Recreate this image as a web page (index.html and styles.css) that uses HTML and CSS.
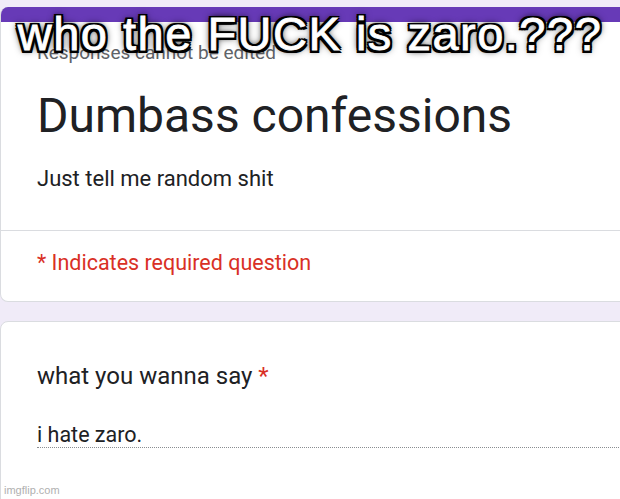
FILE: index.html
```html
<!DOCTYPE html>
<html>
<head>
<meta charset="utf-8">
<link rel="stylesheet" href="styles.css">
</head>
<body>
<div class="page">
  <div class="card card-header">
    <div class="accent"></div>
    <div class="head">
      <div class="responses">Responses cannot be edited</div>
      <div class="title">Dumbass confessions</div>
      <div class="desc">Just tell me random shit</div>
    </div>
    <div class="required">* Indicates required question</div>
  </div>
  <div class="card card-question">
    <div class="question">what you wanna say <span class="star">*</span></div>
    <div class="answer">i hate zaro.</div>
  </div>
</div>
<div class="caption">who the FUCK is zaro.???</div>
<div class="watermark">imgflip.com</div>
</body>
</html>
```
FILE: styles.css
```css
html, body {
  margin: 0;
  padding: 0;
}
body {
  width: 620px;
  height: 499px;
  overflow: hidden;
  background: #f0ebf8;
  font-family: Roboto, "Liberation Sans", Arial, sans-serif;
  color: #202124;
  position: relative;
}
.page {
  padding-top: 7px;
  display: flex;
  flex-direction: column;
  gap: 19px;
}
.card {
  width: 680px;
  background: #fff;
  border: 1px solid #dadce0;
  border-radius: 8px;
  overflow: hidden;
  box-sizing: border-box;
}
.card-header {
  border-top: 0;
}
.accent {
  height: 15px;
  background: #673ab7;
}
.head {
  padding: 0 36px 37px 36px;
  border-bottom: 1px solid #dadce0;
}
.responses {
  margin-top: 19px;
  font-size: 19px;
  line-height: 24px;
  color: #5f6368;
}
.title {
  margin-top: 23px;
  font-size: 48px;
  line-height: 56px;
  color: #202124;
}
.desc {
  margin-top: 21px;
  font-size: 22px;
  line-height: 28px;
  color: #202124;
}
.required {
  padding: 18px 36px 24px 36px;
  font-size: 21.5px;
  line-height: 28px;
  color: #d93025;
}
.card-question {
  height: 200px;
  padding: 38px 0 0 36px;
}
.question {
  font-size: 24px;
  line-height: 32px;
  color: #202124;
}
.star {
  color: #d93025;
}
.answer {
  margin-top: 31px;
  font-size: 21.5px;
  line-height: 24px;
  border-bottom: 1px dotted #8a8d91;
  color: #202124;
}
.caption {
  position: absolute;
  top: 10px;
  left: 0;
  right: 0;
  text-align: center;
  white-space: nowrap;
  font-family: "Liberation Sans", Arial, sans-serif;
  font-weight: normal;
  font-size: 47px;
  line-height: 47px;
  letter-spacing: 1.5px;
  color: #fff;
  -webkit-text-stroke: 0.8px #fff;
  text-shadow:
    2.5px 2.5px 0 #000, -2.5px -2.5px 0 #000, 2.5px -2.5px 0 #000, -2.5px 2.5px 0 #000,
    0 2.5px 0 #000, 0 -2.5px 0 #000, 2.5px 0 0 #000, -2.5px 0 0 #000,
    0 0 5px #000, 0 0 8px #000;
}
.watermark {
  position: absolute;
  left: 4px;
  top: 484px;
  font-family: "Liberation Sans", Arial, sans-serif;
  font-size: 11px;
  line-height: 13px;
  color: #b0b0b0;
}
```
